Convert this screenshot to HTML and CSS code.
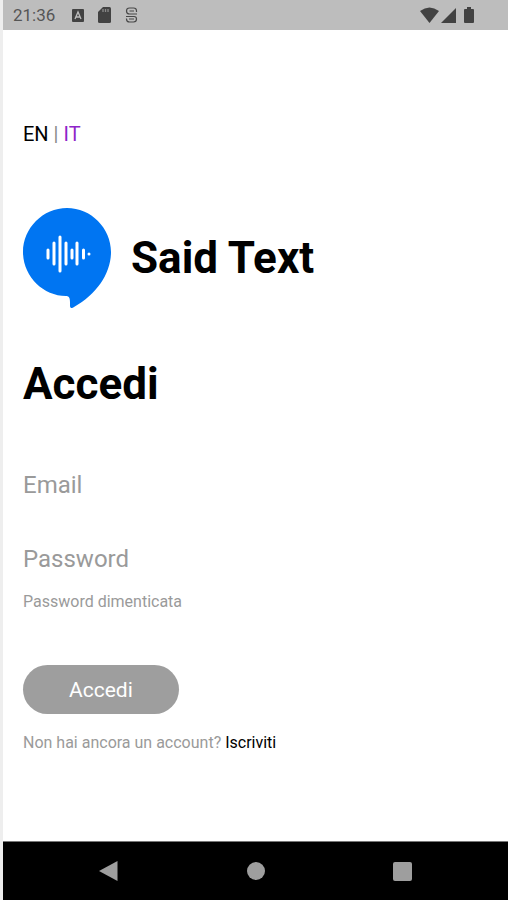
FILE: index.html
```html
<!DOCTYPE html>
<html lang="it">
<head>
    <meta charset="UTF-8">
    <meta name="viewport" content="width=device-width, initial-scale=1.0">
    <title>Said Text</title>
    <link rel="stylesheet" href="styles.css">
</head>
<body>

    <header class="status-bar">
        <span class="time">21:36</span>
        <div class="notifications">
            <svg width="12" height="13" viewBox="0 0 12 13">
                <rect width="12" height="13" rx="1" fill="#424242"/>
                <path d="M3 10 L6 3 L9 10 M4 8 H8" fill="none" stroke="#bdbdbd" stroke-width="1.3"/>
            </svg>
            <svg width="13" height="16" viewBox="0 0 13 16">
                <path d="M5 0 H11.5 Q13 0 13 1.5 V14.5 Q13 16 11.5 16 H1.5 Q0 16 0 14.5 V5 Z" fill="#424242"/>
                <path d="M5 2 V5 M7.5 2 V5 M10 2 V5" stroke="#8a8a8a" stroke-width="1.3"/>
            </svg>
            <svg width="13" height="16" viewBox="0 0 13 16">
                <path d="M11.5 5 V4 Q11.5 1 8.5 1 H4.5 Q1.5 1 1.5 4 Q1.5 7 4.5 7 H12 M1 9.5 H9 Q11.5 9.500 11.5 12 Q11.5 15 8.5 15 H4.5 Q1.5 15 1.5 12 V11.5 M9 4 H4.5 M4 12 H9" fill="none" stroke="#484848" stroke-width="1.2"/>
            </svg>
        </div>
        <svg class="signal" width="56" height="17" viewBox="0 0 56 17">
            <path d="M0 4 Q9.5 -3 19 4 L9.5 16 Z" fill="#424242"/>
            <path d="M36 1 V16 H21 Z" fill="#424242"/>
            <path d="M47 2 V0 H51 V2 H53 Q54 2 54 3 V15 Q54 16 53 16 H45 Q44 16 44 15 V3 Q44 2 45 2 Z" fill="#424242"/>
        </svg>
    </header>

    <main class="content">
        <nav class="languages">
            <a href="#en">EN</a> <span>|</span> <a class="active" href="#it">IT</a>
        </nav>

        <div class="brand">
            <svg width="88" height="102" viewBox="0 0 88 102">
                <path d="M44 1 C20 1 0 21 0 45 C0 69 20 89 43 89 C46 89 47 91 47 95 V99 C47 101 49 102 51 100 C74 87 88 66 88 45 C88 21 68 1 44 1 Z" fill="#0075f2"/>
                <path d="M25 43 V51 M31 36 V57 M37 30 V64 M43 36 V57 M49 43 V51 M54 36 V57 M60.5 43 V51 M66 47 V47.1" fill="none" stroke="#fff" stroke-width="3" stroke-linecap="round"/>
            </svg>
            <span class="brand-name">Said Text</span>
        </div>

        <h1>Accedi</h1>

        <form>
            <input type="email" id="email" placeholder="Email" aria-label="Email">
            <input type="password" id="password" placeholder="Password" aria-label="Password">
            <a class="forgot" href="#password">Password dimenticata</a>
            <button class="btn" type="button">Accedi</button>
        </form>

        <p class="signup">Non hai ancora un account? <a href="#iscriviti">Iscriviti</a></p>
    </main>

    <footer class="nav-bar">
        <button type="button" aria-label="Indietro">
            <svg width="20" height="22" viewBox="0 0 20 22"><path d="M18.5 1 V21 L0 11 Z" fill="#9e9e9e"/></svg>
        </button>
        <button type="button" aria-label="Home">
            <svg width="20" height="20" viewBox="0 0 20 20"><circle cx="10" cy="10" r="9" fill="#9e9e9e"/></svg>
        </button>
        <button type="button" aria-label="Recenti">
            <svg width="20" height="20" viewBox="0 0 20 20"><rect width="19" height="19" y="1" rx="2" fill="#9e9e9e"/></svg>
        </button>
    </footer>

</body>
</html>
```
FILE: styles.css
```css
* {
    box-sizing: border-box;
}

body {
    display: flex;
    flex-direction: column;
    min-height: 100vh;
    margin: 0;
    border-left: 3px solid #eee;
    background-color: #fff;
    color: #000;
    font-family: Roboto, sans-serif;
}

a {
    color: inherit;
    text-decoration: none;
}

svg {
    display: block;
}

.status-bar {
    display: flex;
    align-items: center;
    height: 30px;
    padding: 0 32px 0 10px;
    background-color: #bdbdbd;
    color: #555;
}

.time {
    font-size: 17px;
}

.notifications {
    display: flex;
    align-items: center;
    gap: 14px;
    margin-left: 17px;
}

.signal {
    margin-left: auto;
}

.content {
    flex: 1;
    padding: 92px 20px 0;
}

.languages {
    font-size: 20px;
    line-height: 24px;
}

.languages span {
    color: #888;
}

.languages .active {
    color: #8e24c9;
}

.brand {
    display: flex;
    align-items: center;
    gap: 20px;
    margin-top: 61px;
}

.brand-name,
h1 {
    font-size: 44px;
    font-weight: bold;
    line-height: 52px;
}

h1 {
    margin: 49px 0 0;
}

form {
    display: flex;
    flex-direction: column;
    align-items: flex-start;
    margin-top: 58px;
}

input {
    width: 100%;
    height: 34px;
    margin-bottom: 40px;
    padding: 0;
    border: none;
    outline: none;
    background: none;
    font-family: inherit;
    font-size: 24px;
}

#password {
    margin-bottom: 16px;
}

input::placeholder {
    color: #9a9a9a;
}

.forgot,
.signup {
    color: #9a9a9a;
    font-size: 16px;
    line-height: 20px;
}

.btn {
    height: 49px;
    margin-top: 53px;
    padding: 0 46px;
    border: none;
    border-radius: 25px;
    background-color: #9e9e9e;
    color: #fff;
    font-family: inherit;
    font-size: 21px;
    cursor: pointer;
}

.signup {
    margin: 19px 0;
}

.signup a {
    color: #000;
}

.nav-bar {
    display: flex;
    justify-content: space-around;
    align-items: center;
    height: 59px;
    padding: 0 32px;
    border-top: 1px solid #777;
    background-color: #000;
}

.nav-bar button {
    padding: 0;
    border: none;
    background: none;
    cursor: pointer;
}
```
